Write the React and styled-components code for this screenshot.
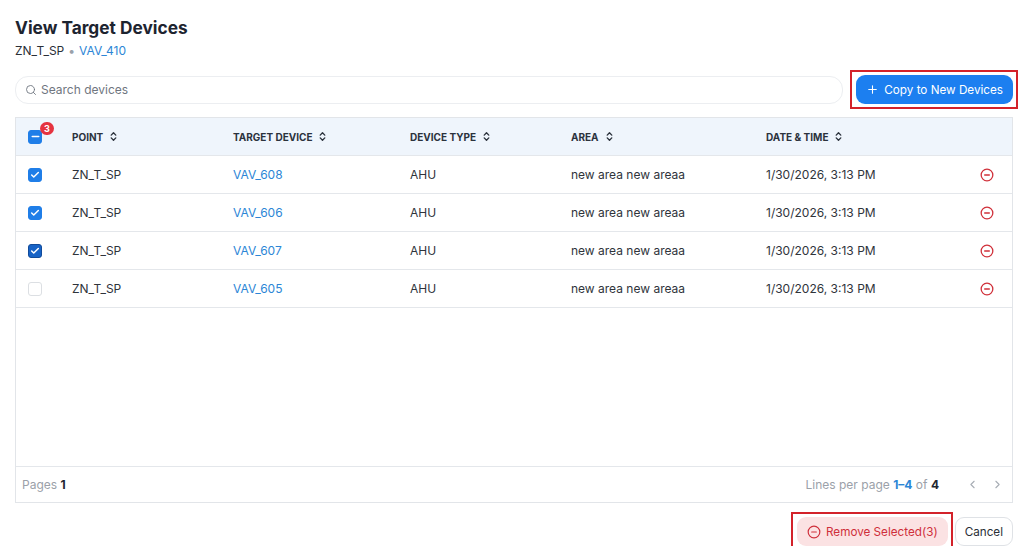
import React from 'react'
import styled, { createGlobalStyle } from 'styled-components'
import { Search, Plus, ChevronsUpDown, CircleMinus, ChevronLeft, ChevronRight, Check, Minus } from 'lucide-react'

const GlobalStyle = createGlobalStyle`
  body {
    margin: 0;
    background: #fff;
    font-family: Inter, 'Noto Sans', sans-serif;
    color: #2a2f37;
  }
`

const Page = styled.div`
  padding: 15px 11px 0 15px;
  width: 1024px;
  box-sizing: border-box;
`

const Title = styled.h1`
  margin: 1px 0 0;
  font-size: 17.3px;
  font-weight: 700;
  color: #1d2430;
  line-height: 24px;
`

const Sub = styled.div`
  margin-top: 2px;
  font-size: 12px;
  color: #2a2f37;
  line-height: 18px;
  span { color: #9aa1aa; margin: 0 4px; }
  a { color: #2c86d6; text-decoration: none; }
`

const Toolbar = styled.div`
  display: flex;
  align-items: center;
  gap: 13px;
  margin-top: 15px;
`

const SearchBox = styled.div`
  flex: 1;
  height: 26px;
  border: 1px solid #eceef1;
  border-radius: 13px;
  display: flex;
  align-items: center;
  gap: 4px;
  padding-left: 9px;
  color: #6f7680;
  font-size: 12px;
`

const Button = styled.button`
  position: relative;
  font-family: inherit;
  font-size: 11.7px;
  height: 29px;
  border-radius: 9px;
  display: flex;
  align-items: center;
  gap: 5px;
  cursor: pointer;
  padding: 0 9px;
  border: 1px solid ${p => p.$variant === 'plain' ? '#dfe2e6' : 'transparent'};
  background: ${p => p.$variant === 'primary' ? '#1c7ff0' : p.$variant === 'danger' ? '#fbe2e3' : '#fff'};
  color: ${p => p.$variant === 'primary' ? '#fff' : p.$variant === 'danger' ? '#cf2f3b' : '#2a2f37'};

  &::after {
    content: '';
    display: ${p => p.$marked ? 'block' : 'none'};
    position: absolute;
    inset: -6px -6px -6px -7px;
    border: 2px solid #d3222a;
    pointer-events: none;
  }
`

const Table = styled.div`
  margin-top: 13px;
  height: 386px;
  border: 1px solid #e2e5e9;
  display: flex;
  flex-direction: column;
  box-sizing: border-box;
`

const Row = styled.div`
  display: grid;
  grid-template-columns: 56px 161px 177px 161px 195px 1fr 50px;
  align-items: center;
  height: 38px;
  border-bottom: 1px solid #e4e7eb;
  box-sizing: border-box;
  font-size: 12px;
  color: #2f343b;
  background: ${p => p.$head ? '#eff5fc' : '#fff'};
`

const HeadCell = styled.div`
  font-size: 10px;
  font-weight: 700;
  color: #2b323c;
  display: flex;
  align-items: center;
  gap: 5px;
`

const Link = styled.span`
  color: #2c86d6;
`

const BoxCell = styled.div`
  padding-left: 12px;
  position: relative;
`

const Box = styled.span`
  width: 14px;
  height: 14px;
  border-radius: 3px;
  box-sizing: border-box;
  display: flex;
  align-items: center;
  justify-content: center;
  background: ${p => p.$on ? (p.$focus ? '#1763c6' : '#1f7ee8') : '#fff'};
  border: 1px solid ${p => p.$on ? (p.$focus ? '#114b9a' : '#1f7ee8') : '#dcdfe3'};
  color: #fff;
`

const Badge = styled.span`
  position: absolute;
  left: 24px;
  top: -8px;
  width: 14px;
  height: 13px;
  border-radius: 7px;
  background: #e53340;
  color: #fff;
  font-size: 9px;
  font-weight: 700;
  display: flex;
  align-items: center;
  justify-content: center;
`

const IconCell = styled.div`
  display: flex;
  justify-content: center;
  color: #d0303a;
`

const Body = styled.div`
  flex: 1;
  border-bottom: 1px solid #e4e7eb;
`

const Footer = styled.div`
  height: 35px;
  display: flex;
  align-items: center;
  justify-content: space-between;
  padding: 0 8px 0 6px;
  font-size: 12px;
  color: #9ba1a9;
  b { color: #1f2630; }
  em { font-style: normal; font-weight: 700; color: #2c86d6; }
`

const Pager = styled.div`
  display: flex;
  align-items: center;
  gap: 11px;
`

const Arrows = styled.div`
  display: flex;
  gap: 12px;
  margin-left: 16px;
  color: #a7adb4;
`

const Actions = styled.div`
  display: flex;
  justify-content: flex-end;
  gap: 7px;
  margin-top: 14px;
`

const rows = [
  { dev: 'VAV_608', on: true },
  { dev: 'VAV_606', on: true },
  { dev: 'VAV_607', on: true, focus: true },
  { dev: 'VAV_605', on: false }
]

const Sort = () => <ChevronsUpDown size={11} strokeWidth={3} color="#2b323c" />

export default function App () {
  return (
    <Page>
      <GlobalStyle />
      <Title>View Target Devices</Title>
      <Sub>ZN_T_SP<span>•</span><a>VAV_410</a></Sub>
      <Toolbar>
        <SearchBox><Search size={12} strokeWidth={1.8} />Search devices</SearchBox>
        <Button $variant="primary" $marked><Plus size={13} strokeWidth={2} />Copy to New Devices</Button>
      </Toolbar>
      <Table>
        <Row $head>
          <BoxCell>
            <Box $on><Minus size={11} strokeWidth={3.5} /></Box>
            <Badge>3</Badge>
          </BoxCell>
          <HeadCell>POINT <Sort /></HeadCell>
          <HeadCell>TARGET DEVICE <Sort /></HeadCell>
          <HeadCell>DEVICE TYPE <Sort /></HeadCell>
          <HeadCell>AREA <Sort /></HeadCell>
          <HeadCell>DATE &amp; TIME <Sort /></HeadCell>
          <div />
        </Row>
        {rows.map(r => (
          <Row key={r.dev}>
            <BoxCell>
              <Box $on={r.on} $focus={r.focus}>{r.on && <Check size={10} strokeWidth={3.5} />}</Box>
            </BoxCell>
            <div>ZN_T_SP</div>
            <Link>{r.dev}</Link>
            <div>AHU</div>
            <div>new area new areaa</div>
            <div>1/30/2026, 3:13 PM</div>
            <IconCell><CircleMinus size={14} strokeWidth={2.2} /></IconCell>
          </Row>
        ))}
        <Body />
        <Footer>
          <div>Pages <b>1</b></div>
          <Pager>
            <div>Lines per page <em>1–4</em> of <b>4</b></div>
            <Arrows><ChevronLeft size={13} /><ChevronRight size={13} /></Arrows>
          </Pager>
        </Footer>
      </Table>
      <Actions>
        <Button $variant="danger" $marked><CircleMinus size={14} strokeWidth={2} />Remove Selected(3)</Button>
        <Button $variant="plain">Cancel</Button>
      </Actions>
    </Page>
  )
}
